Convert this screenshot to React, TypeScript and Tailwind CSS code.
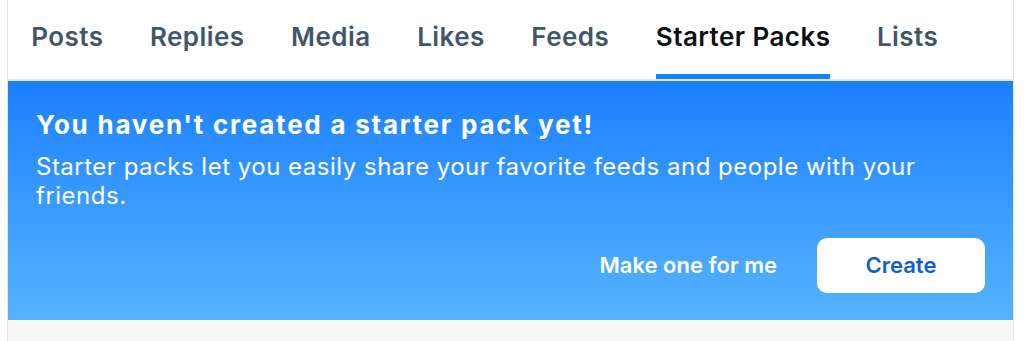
import React from "react";

const tabs = ["Posts", "Replies", "Media", "Likes", "Feeds", "Starter Packs", "Lists"];

export default function App() {
  return (
    <div
      className="w-full h-[341px] bg-white overflow-hidden"
      style={{ fontFamily: "Inter, 'Noto Sans', sans-serif" }}
    >
      <div className="ml-[7px] w-[1007px] h-[341px] border-x border-[#e3e6ea] bg-[#f6f6f7] flex flex-col">
        <div className="bg-white flex border-b-2 border-[#e3e6ea] h-[81px] shrink-0">
          {tabs.map((t) => {
            const active = t === "Starter Packs";
            return (
              <div key={t} className="px-[23.25px] flex flex-col">
                <span
                  className={
                    "pt-[22px] text-[26px] leading-[30px] font-semibold tracking-[0.45px] " +
                    (active ? "text-[#0b0f14]" : "text-[#42566b]")
                  }
                >
                  {t}
                </span>
                <div
                  className={
                    "mt-auto h-[5px] " + (active ? "bg-[#1083fe]" : "bg-transparent")
                  }
                />
              </div>
            );
          })}
        </div>
        <div className="bg-gradient-to-b from-[#1a7ffe] to-[#56b3ff] px-7 pt-7 pb-[27px] text-white shrink-0">
          <div className="text-[26px] leading-[32px] font-bold tracking-[1.75px]">
            You haven't created a starter pack yet!
          </div>
          <div className="mt-[11px] text-[24px] leading-[29px] font-normal tracking-[0.5px]">
            Starter packs let you easily share your favorite feeds and people with your friends.
          </div>
          <div className="mt-7 flex items-center justify-end gap-10">
            <span className="text-[22px] font-semibold">Make one for me</span>
            <div className="w-[168px] h-[55px] rounded-[10px] bg-white flex items-center justify-center text-[22px] font-semibold text-[#1060cc]">
              Create
            </div>
          </div>
        </div>
      </div>
    </div>
  );
}
